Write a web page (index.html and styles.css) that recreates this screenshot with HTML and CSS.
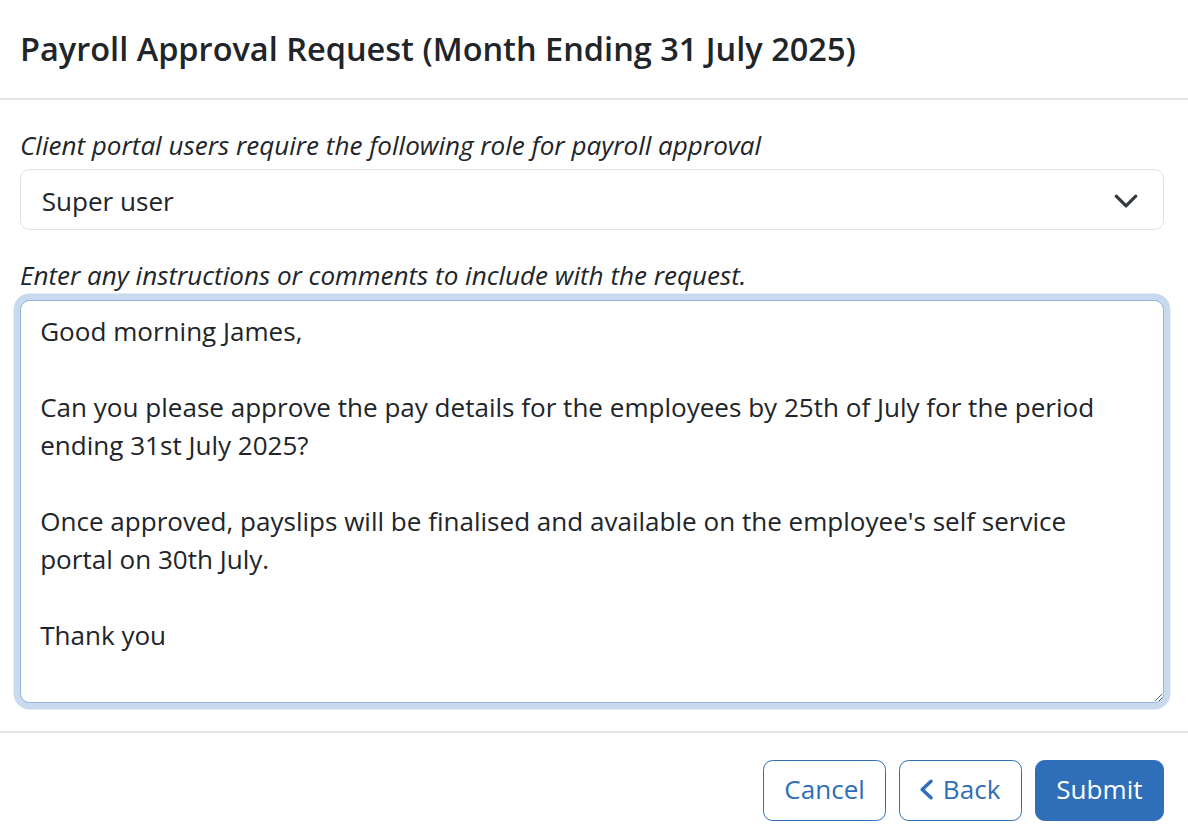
FILE: index.html
```html
<!DOCTYPE html>
<html lang="en">
<head>
<meta charset="utf-8">
<title>Payroll Approval Request</title>
<link rel="stylesheet" href="styles.css">
</head>
<body>
<div class="modal">
  <div class="modal-header">
    <h1 class="modal-title">Payroll Approval Request (Month Ending 31 July 2025)</h1>
  </div>
  <div class="modal-body">
    <label class="form-label">Client portal users require the following role for payroll approval</label>
    <div class="form-select">
      <span>Super user</span>
      <svg class="select-arrow" width="26" height="20" viewBox="0 0 16 12" aria-hidden="true"><path d="M2 3l6 6 6-6" fill="none" stroke="#343a40" stroke-width="2" stroke-linecap="round" stroke-linejoin="round"/></svg>
    </div>
    <label class="form-label label-comments">Enter any instructions or comments to include with the request.</label>
    <textarea class="form-control">Good morning James,

Can you please approve the pay details for the employees by 25th of July for the period ending 31st July 2025?

Once approved, payslips will be finalised and available on the employee's self service portal on 30th July.

Thank you</textarea>
  </div>
  <div class="modal-footer">
    <button class="btn btn-outline" type="button">Cancel</button>
    <button class="btn btn-outline" type="button"><svg class="back-icon" width="15" height="21" viewBox="0 0 15 21" aria-hidden="true"><path d="M12 2.2L3.2 10.5 12 18.8" fill="none" stroke="currentColor" stroke-width="3.4" stroke-linecap="round" stroke-linejoin="round"/></svg>Back</button>
    <button class="btn btn-primary" type="button">Submit</button>
  </div>
</div>
</body>
</html>
```

FILE: styles.css
```css
* {
  box-sizing: border-box;
}

html, body {
  margin: 0;
  padding: 0;
  background: #ffffff;
}

body {
  font-family: "Open Sans", "Liberation Sans", sans-serif;
  font-size: 26.05px;
  line-height: 38.4px;
  color: #212529;
}

.modal {
  width: 1188px;
  overflow: hidden;
}

.modal-header {
  display: flex;
  align-items: center;
  height: 100px;
  padding: 0 24px 0 20px;
  border-bottom: 2px solid #e2e5e9;
}

.modal-title {
  margin: 0;
  font-size: 32.5px;
  line-height: 48px;
  font-weight: 600;
  color: #212529;
}

.modal-body {
  display: flex;
  flex-direction: column;
  padding: 22px 24px 28px 20px;
}

.form-label {
  display: block;
  font-style: italic;
  padding-top: 4px;
  margin-bottom: 5px;
}

.label-comments {
  margin-top: 22px;
}

.form-select {
  display: flex;
  align-items: center;
  justify-content: space-between;
  height: 61px;
  padding: 2px 24px 0 20.8px;
  border: 1.6px solid #dee2e6;
  border-radius: 9.6px;
  background: #ffffff;
}

.select-arrow {
  display: block;
}

.form-control {
  display: block;
  width: 100%;
  height: 403px;
  margin: 0;
  padding: 11px 19.2px 8px;
  font-family: inherit;
  font-size: 26.05px;
  line-height: 38px;
  color: #212529;
  border: 1.6px solid #93b4da;
  border-radius: 9.6px;
  box-shadow: 0 0 0 6.4px #cadaee;
  outline: none;
  resize: vertical;
  overflow: hidden;
}

.modal-footer {
  display: flex;
  justify-content: flex-end;
  gap: 13px;
  padding: 27px 24px 20px 20px;
  border-top: 2px solid #e2e5e9;
}

.btn {
  display: inline-flex;
  align-items: center;
  height: 61px;
  padding: 0 20.5px 2px;
  font-family: inherit;
  font-size: 26.05px;
  line-height: 38.4px;
  border: 1.6px solid #2f6eb8;
  border-radius: 9.6px;
  cursor: pointer;
}

.btn-outline {
  background: #ffffff;
  color: #2f6eb8;
}

.btn-primary {
  background: #2f6eb8;
  color: #ffffff;
}

.back-icon {
  display: block;
  margin-right: 9px;
  margin-left: -2px;
}
```
